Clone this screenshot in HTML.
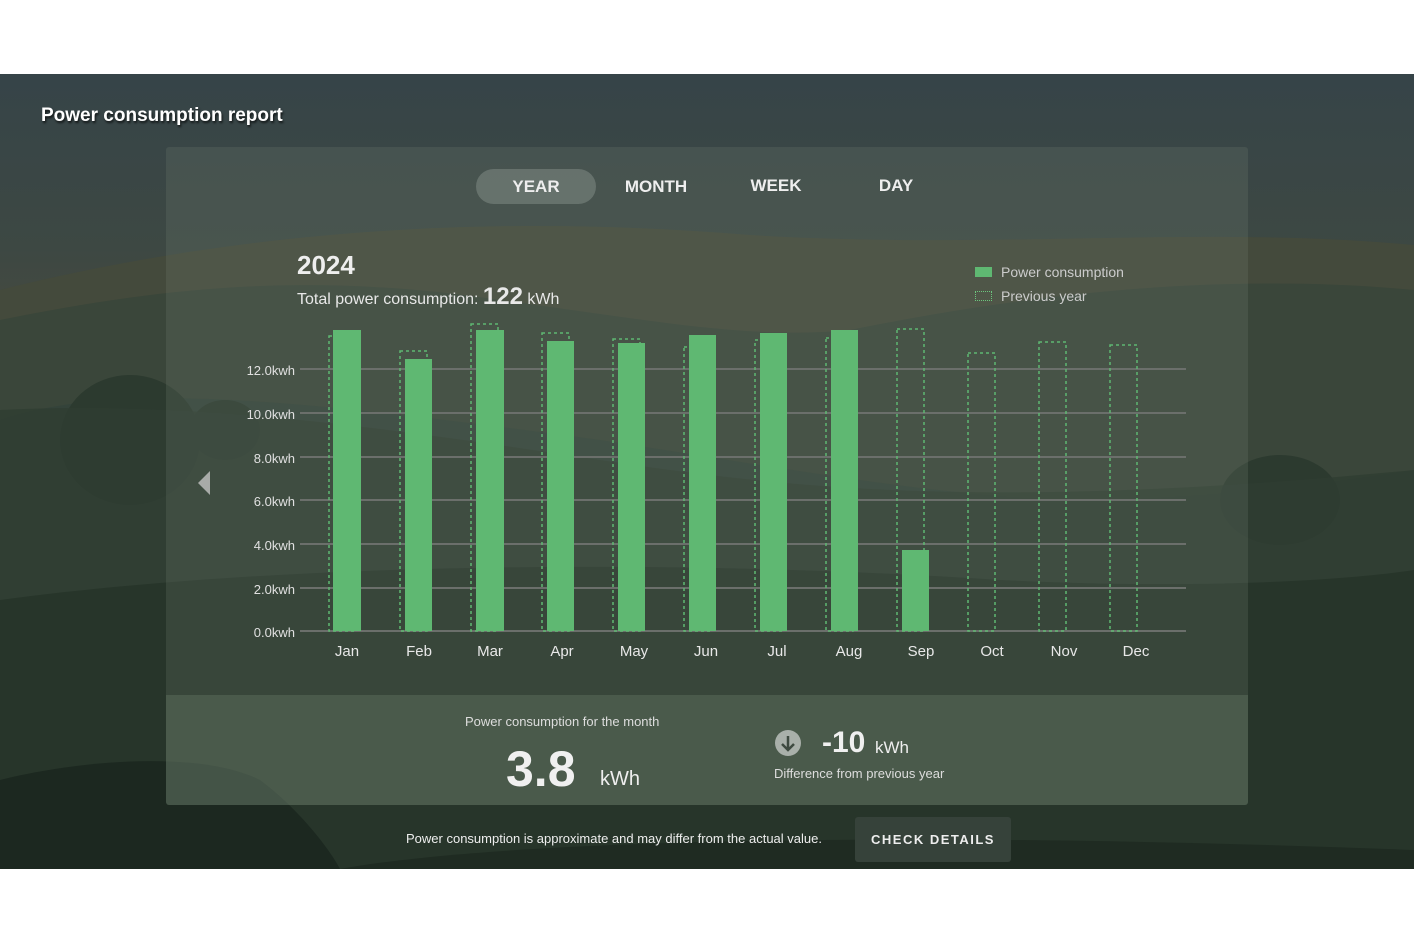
<!DOCTYPE html>
<html><head><meta charset="utf-8"><style>
*{margin:0;padding:0;box-sizing:border-box}
body{width:1414px;height:943px;background:#fff;position:relative;overflow:hidden;font-family:"Liberation Sans",sans-serif;color:#fff}
.bg{position:absolute;left:0;top:74px;width:1414px;height:795px;overflow:hidden}
.abs{position:absolute;white-space:nowrap}
</style></head><body>
<div class="bg">
<svg width="1414" height="795" viewBox="0 74 1414 795">
<defs>
<linearGradient id="sky" x1="0" y1="0" x2="0" y2="1">
<stop offset="0" stop-color="#364448"/><stop offset="0.22" stop-color="#3d4843"/><stop offset="0.38" stop-color="#4c4b3d"/><stop offset="1" stop-color="#2a3a2e"/>
</linearGradient>
</defs>
<rect x="0" y="74" width="1414" height="795" fill="url(#sky)"/>
<path d="M0 290 C200 240 450 210 750 235 C1000 250 1200 225 1414 245 L1414 869 L0 869Z" fill="#444a3c"/>
<path d="M0 320 C150 290 300 270 500 300 C650 320 750 340 850 330 C1000 300 1200 270 1414 290 L1414 869 L0 869Z" fill="#3a463a"/>
<path d="M0 420 C120 380 300 400 600 440 C800 470 950 500 1100 500 C1250 495 1350 480 1414 470 L1414 869 L0 869Z" fill="#34433a"/>
<ellipse cx="130" cy="440" rx="70" ry="65" fill="#2c3a2f"/>
<ellipse cx="225" cy="430" rx="35" ry="30" fill="#2c3a2f"/>
<ellipse cx="1280" cy="500" rx="60" ry="45" fill="#2c3a2f"/>
<path d="M0 410 C200 400 400 430 600 460 C800 490 1000 510 1414 470 L1414 869 L0 869Z" fill="#2f3d32" opacity="0.8"/>
<path d="M0 600 C300 560 700 560 1000 580 C1200 590 1350 580 1414 570 L1414 869 L0 869Z" fill="#27352a"/>
<path d="M0 780 C80 760 200 750 260 780 C300 810 330 850 340 869 L0 869Z" fill="#1c2820"/>
<path d="M340 869 C500 840 900 830 1414 850 L1414 869Z" fill="#1f2b22"/>
</svg>
</div>

<div class="abs" style="left:41px;top:105px;font-size:19px;font-weight:bold;text-shadow:1px 2px 2px rgba(0,0,0,.7)">Power consumption report</div>

<div class="abs" style="left:166px;top:147px;width:1082px;height:658px;background:rgba(120,130,120,0.22);border-radius:3px"></div>
<div class="abs" style="left:166px;top:695px;width:1082px;height:110px;background:rgba(110,130,110,0.35);border-radius:0 0 3px 3px"></div>

<div class="abs" style="left:476px;top:169px;width:120px;height:35px;border-radius:18px;background:rgba(140,150,145,0.45)"></div>
<div class="abs" style="left:476px;top:177px;width:120px;text-align:center;font-size:17px;font-weight:bold;color:#eee">YEAR</div>
<div class="abs" style="left:596px;top:177px;width:120px;text-align:center;font-size:17px;font-weight:bold;color:#eee">MONTH</div>
<div class="abs" style="left:716px;top:176px;width:120px;text-align:center;font-size:17px;font-weight:bold;color:#eee">WEEK</div>
<div class="abs" style="left:836px;top:176px;width:120px;text-align:center;font-size:17px;font-weight:bold;color:#eee">DAY</div>

<div class="abs" style="left:297px;top:250px;font-size:26px;font-weight:bold;color:#eee">2024</div>
<div class="abs" style="left:297px;top:283px;font-size:16px;color:#e8e8e8">Total power consumption: <span style="font-size:24px;font-weight:bold">122</span> kWh</div>

<div class="abs" style="left:975px;top:267px;width:17px;height:10px;background:#5fb872"></div>
<div class="abs" style="left:1001px;top:264px;font-size:14px;color:#ccc">Power consumption</div>
<div class="abs" style="left:975px;top:291px;width:17px;height:10px;border:1.5px dotted #6cc77e"></div>
<div class="abs" style="left:1001px;top:288px;font-size:14px;color:#ccc">Previous year</div>

<svg class="abs" style="left:0;top:0" width="1414" height="943">
<g stroke="#6b6f6b" stroke-width="2">
<line x1="300" y1="369" x2="1186" y2="369"/><line x1="300" y1="413" x2="1186" y2="413"/><line x1="300" y1="457" x2="1186" y2="457"/><line x1="300" y1="500" x2="1186" y2="500"/><line x1="300" y1="544" x2="1186" y2="544"/><line x1="300" y1="588" x2="1186" y2="588"/><line x1="300" y1="631" x2="1186" y2="631"/>
</g>
<g fill="none" stroke="#5fb872" stroke-width="1.5" stroke-dasharray="3,3">
<rect x="329" y="336" width="27" height="295"/><rect x="400" y="351" width="27" height="280"/><rect x="471" y="324" width="27" height="307"/><rect x="542" y="333" width="27" height="298"/><rect x="613" y="339" width="27" height="292"/><rect x="684" y="347" width="27" height="284"/><rect x="755" y="340" width="27" height="291"/><rect x="826" y="338" width="27" height="293"/><rect x="897" y="329" width="27" height="302"/><rect x="968" y="353" width="27" height="278"/><rect x="1039" y="342" width="27" height="289"/><rect x="1110" y="345" width="27" height="286"/>
</g>
<g fill="#5fb872">
<rect x="333" y="330" width="28" height="301"/><rect x="405" y="359" width="27" height="272"/><rect x="476" y="330" width="28" height="301"/><rect x="547" y="341" width="27" height="290"/><rect x="618" y="343" width="27" height="288"/><rect x="689" y="335" width="27" height="296"/><rect x="760" y="333" width="27" height="298"/><rect x="831" y="330" width="27" height="301"/><rect x="902" y="550" width="27" height="81"/>
</g>
<g font-family="Liberation Sans" font-size="13" fill="#e0e0e0" text-anchor="end">
<text x="295" y="375">12.0kwh</text><text x="295" y="419">10.0kwh</text><text x="295" y="463">8.0kwh</text><text x="295" y="506">6.0kwh</text><text x="295" y="550">4.0kwh</text><text x="295" y="594">2.0kwh</text><text x="295" y="637">0.0kwh</text>
</g>
<g font-family="Liberation Sans" font-size="15" fill="#e8e8e8" text-anchor="middle">
<text x="347" y="656">Jan</text><text x="419" y="656">Feb</text><text x="490" y="656">Mar</text><text x="562" y="656">Apr</text><text x="634" y="656">May</text><text x="706" y="656">Jun</text><text x="777" y="656">Jul</text><text x="849" y="656">Aug</text><text x="921" y="656">Sep</text><text x="992" y="656">Oct</text><text x="1064" y="656">Nov</text><text x="1136" y="656">Dec</text>
</g>
<polygon points="210,471 210,495 198,483" fill="#a8aba8"/>
<circle cx="788" cy="743" r="13" fill="#a9b0aa"/>
<path d="M788 736 V750 M782 744 L788 750 L794 744" stroke="#3e4a40" stroke-width="2.5" fill="none"/>
</svg>

<div class="abs" style="left:465px;top:714px;font-size:13px;color:#ddd">Power consumption for the month</div>
<div class="abs" style="left:506px;top:740px;font-size:50px;font-weight:bold;color:#f0f0f0">3.8</div>
<div class="abs" style="left:600px;top:768px;font-size:20px;color:#eee">kWh</div>
<div class="abs" style="left:822px;top:726px;font-size:30px;font-weight:bold;color:#f0f0f0">-10</div>
<div class="abs" style="left:875px;top:738px;font-size:17px;color:#eee">kWh</div>
<div class="abs" style="left:774px;top:766px;font-size:13px;color:#ddd">Difference from previous year</div>

<div class="abs" style="left:406px;top:831px;font-size:13px;color:#eee">Power consumption is approximate and may differ from the actual value.</div>
<div class="abs" style="left:855px;top:817px;width:156px;height:45px;background:#36423a;border-radius:3px;font-size:13px;font-weight:bold;letter-spacing:1.5px;text-align:center;line-height:45px;color:#eee">CHECK DETAILS</div>
</body></html>
